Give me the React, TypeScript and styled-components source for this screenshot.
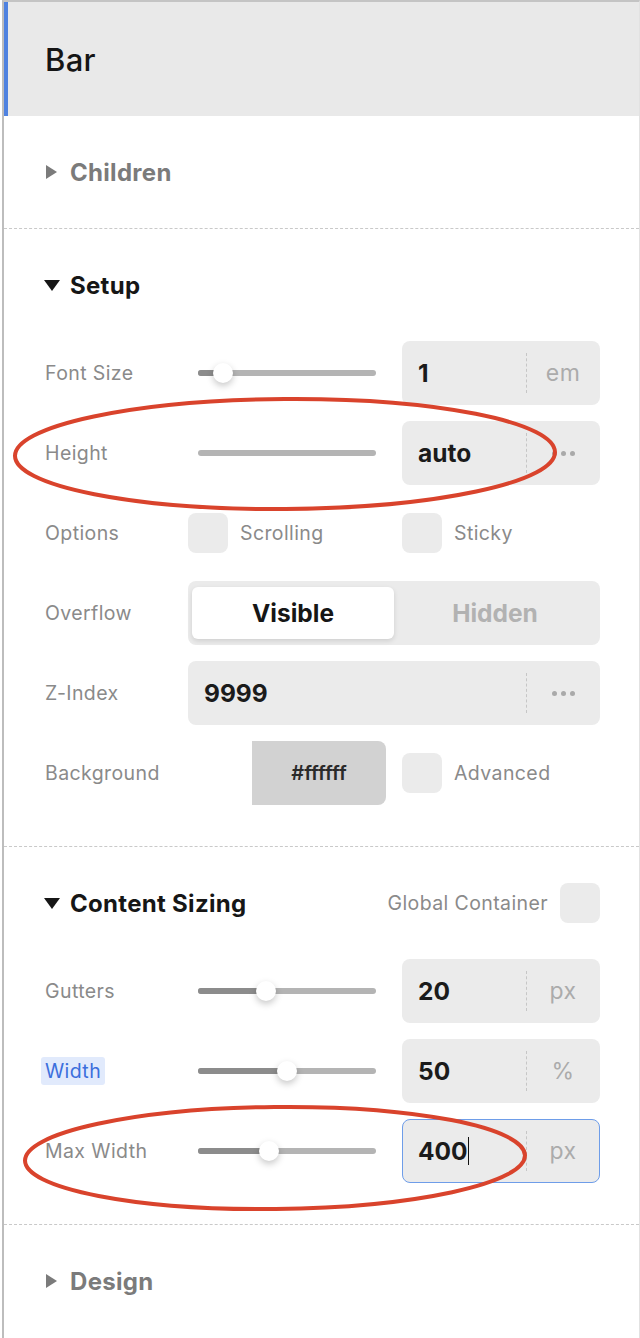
import React from "react";
import styled, { createGlobalStyle } from "styled-components";

const Global = createGlobalStyle`
  html, body { margin: 0; padding: 0; background: #ffffff; }
  body { font-family: Inter, "Noto Sans", "Liberation Sans", sans-serif; -webkit-font-smoothing: antialiased; }
  * { box-sizing: border-box; }
`;

const Panel = styled.div`
  position: relative;
  width: 638px;
  height: 1338px;
  margin-left: 2px;
  border-left: 2px solid #bdbdbd;
  border-top: 2px solid #c4c4c4;
  border-right: 1px solid #e2e2e2;
  overflow: hidden;
  background: #fff;
`;

const Header = styled.div`
  height: 114px;
  background: #e9e9e9;
  border-left: 4px solid #4f82e0;
  display: flex;
  align-items: center;
  padding-left: 37px;
  font-size: 31px;
  font-weight: 500;
  color: #151515;
  letter-spacing: 0.3px;
`;

const Section = styled.section<{ $last?: boolean; $collapsed?: boolean }>`
  padding: 36px 39px ${(p) => (p.$collapsed ? "36px" : "41px")} 41px;
  border-bottom: ${(p) => (p.$last ? "none" : "1px dashed #c9c9c9")};
  display: flex;
  flex-direction: column;
  gap: 16px;
`;

const SectionHead = styled.div`
  height: 40px;
  display: flex;
  align-items: center;
  justify-content: space-between;
  margin-bottom: 20px;
`;

const CollapsedHead = styled(SectionHead)`
  margin-bottom: 0;
`;

const Title = styled.div<{ $muted?: boolean }>`
  display: flex;
  align-items: center;
  gap: 11px;
  font-size: 24px;
  font-weight: 700;
  letter-spacing: 0.3px;
  color: ${(p) => (p.$muted ? "#7b7b7b" : "#161616")};
`;

const Caret = styled.span<{ $open?: boolean; $muted?: boolean }>`
  width: 0;
  height: 0;
  margin-left: ${(p) => (p.$open ? "-1px" : "1px")};
  ${(p) =>
    p.$open
      ? `border-left: 8px solid transparent; border-right: 8px solid transparent; border-top: 11px solid #161616; margin-right: -1px;`
      : `border-top: 7px solid transparent; border-bottom: 7px solid transparent; border-left: 11px solid ${p.$muted ? "#7b7b7b" : "#161616"}; margin-right: 2px;`}
`;

const Row = styled.div`
  display: grid;
  grid-template-columns: 143px 214px 198px;
  align-items: center;
  height: 64px;
`;

const Label = styled.div<{ $active?: boolean }>`
  font-size: 19.5px;
  color: ${(p) => (p.$active ? "#3c6fdc" : "#8a8a8a")};
  letter-spacing: 0.4px;
  white-space: nowrap;
  ${(p) =>
    p.$active
      ? `background: #e1eafc; justify-self: start; margin-left: -4px; padding: 2px 4px; border-radius: 3px;`
      : ``}
`;

const Track = styled.div`
  position: relative;
  height: 6px;
  margin: 0 26px 0 10px;
  border-radius: 3px;
  background: #b4b4b4;
`;

const Fill = styled.div`
  height: 100%;
  border-radius: 3px 0 0 3px;
  background: #8c8c8c;
`;

const Thumb = styled.div`
  position: absolute;
  top: 50%;
  width: 20px;
  height: 20px;
  margin: -10px 0 0 -10px;
  border-radius: 50%;
  background: #fff;
  box-shadow: 0 3px 7px rgba(0, 0, 0, 0.22);
`;

const Field = styled.div<{ $focus?: boolean; $wide?: boolean }>`
  height: 64px;
  border-radius: 8px;
  background: #ebebeb;
  display: grid;
  grid-template-columns: 1fr 1px 72px;
  align-items: center;
  border: ${(p) => (p.$focus ? "1.5px solid #6e9de9" : "1.5px solid transparent")};
  ${(p) => (p.$wide ? "grid-column: 2 / span 2;" : "")}
`;

const Value = styled.div`
  padding-left: 15px;
  font-size: 24.5px;
  font-weight: 700;
  color: #1b1b1b;
  display: flex;
  align-items: center;
`;

const Cursor = styled.span`
  display: inline-block;
  width: 1.5px;
  height: 28px;
  background: #111;
`;

const Divider = styled.div`
  height: 40px;
  border-left: 1px dashed #c6c6c6;
`;

const Unit = styled.div`
  text-align: center;
  font-size: 23px;
  color: #ababab;
  letter-spacing: 0.5px;
`;

const Dots = styled.div`
  display: flex;
  justify-content: center;
  gap: 4px;
  span {
    width: 5px;
    height: 5px;
    border-radius: 50%;
    background: #a9a9a9;
  }
`;

const CheckGroup = styled.div`
  display: flex;
  align-items: center;
  gap: 12px;
  font-size: 19.5px;
  color: #8a8a8a;
  letter-spacing: 0.4px;
  white-space: nowrap;
`;

const Box = styled.div`
  width: 40px;
  height: 40px;
  border-radius: 8px;
  background: #ebebeb;
  flex: none;
`;

const Segmented = styled.div`
  grid-column: 2 / span 2;
  height: 64px;
  border-radius: 8px;
  background: #ebebeb;
  display: grid;
  grid-template-columns: 1fr 1fr;
  padding: 6px 4px;
`;

const Segment = styled.div<{ $on?: boolean }>`
  display: flex;
  align-items: center;
  justify-content: center;
  font-size: 24.5px;
  font-weight: 700;
  border-radius: 6px;
  color: ${(p) => (p.$on ? "#161616" : "#b2b2b2")};
  background: ${(p) => (p.$on ? "#fff" : "transparent")};
  box-shadow: ${(p) => (p.$on ? "0 2px 5px rgba(0,0,0,0.12)" : "none")};
`;

const Swatch = styled.div`
  justify-self: end;
  margin-right: 16px;
  width: 134px;
  height: 64px;
  border-radius: 0 8px 8px 0;
  background: #d2d2d2;
  display: flex;
  align-items: center;
  justify-content: center;
  font-size: 20px;
  font-weight: 600;
  color: #2a2a2a;
`;

const GlobalToggle = styled(CheckGroup)`
  gap: 12px;
`;

const Overlay = styled.svg`
  position: absolute;
  left: -4px;
  top: -2px;
  pointer-events: none;
`;

function Slider({ pct, thumb = true }: { pct: number; thumb?: boolean }) {
  return (
    <Track>
      {thumb && <Fill style={{ width: `${pct}%` }} />}
      {thumb && <Thumb style={{ left: `${pct}%` }} />}
    </Track>
  );
}

function DotsIcon() {
  return (
    <Dots>
      <span />
      <span />
      <span />
    </Dots>
  );
}

export default function App() {
  return (
    <>
      <Global />
      <Panel>
        <Header>Bar</Header>

        <Section $collapsed>
          <CollapsedHead>
            <Title $muted>
              <Caret $muted />
              Children
            </Title>
          </CollapsedHead>
        </Section>

        <Section>
          <SectionHead>
            <Title>
              <Caret $open />
              Setup
            </Title>
          </SectionHead>

          <Row>
            <Label>Font Size</Label>
            <Slider pct={14} />
            <Field>
              <Value>1</Value>
              <Divider />
              <Unit>em</Unit>
            </Field>
          </Row>

          <Row>
            <Label>Height</Label>
            <Slider pct={0} thumb={false} />
            <Field>
              <Value>auto</Value>
              <Divider />
              <DotsIcon />
            </Field>
          </Row>

          <Row>
            <Label>Options</Label>
            <CheckGroup>
              <Box />
              Scrolling
            </CheckGroup>
            <CheckGroup>
              <Box />
              Sticky
            </CheckGroup>
          </Row>

          <Row>
            <Label>Overflow</Label>
            <Segmented>
              <Segment $on>Visible</Segment>
              <Segment>Hidden</Segment>
            </Segmented>
          </Row>

          <Row>
            <Label>Z-Index</Label>
            <Field $wide>
              <Value>9999</Value>
              <Divider />
              <DotsIcon />
            </Field>
          </Row>

          <Row>
            <Label>Background</Label>
            <Swatch>#ffffff</Swatch>
            <CheckGroup>
              <Box />
              Advanced
            </CheckGroup>
          </Row>
        </Section>

        <Section>
          <SectionHead>
            <Title>
              <Caret $open />
              Content Sizing
            </Title>
            <GlobalToggle>
              Global Container
              <Box />
            </GlobalToggle>
          </SectionHead>

          <Row>
            <Label>Gutters</Label>
            <Slider pct={38} />
            <Field>
              <Value>20</Value>
              <Divider />
              <Unit>px</Unit>
            </Field>
          </Row>

          <Row>
            <Label $active>Width</Label>
            <Slider pct={50} />
            <Field>
              <Value>50</Value>
              <Divider />
              <Unit>%</Unit>
            </Field>
          </Row>

          <Row>
            <Label>Max Width</Label>
            <Slider pct={40} />
            <Field $focus>
              <Value>
                400
                <Cursor />
              </Value>
              <Divider />
              <Unit>px</Unit>
            </Field>
          </Row>
        </Section>

        <Section $last $collapsed>
          <CollapsedHead>
            <Title $muted>
              <Caret $muted />
              Design
            </Title>
          </CollapsedHead>
        </Section>

        <Overlay width="640" height="1338" viewBox="0 0 640 1338">
          <ellipse cx="285" cy="454" rx="270" ry="55" fill="none" stroke="#d9432c" strokeWidth="4" transform="rotate(-0.4 285 454)" />
          <ellipse cx="275" cy="1158" rx="250" ry="51" fill="none" stroke="#d9432c" strokeWidth="4" transform="rotate(-0.6 275 1158)" />
        </Overlay>
      </Panel>
    </>
  );
}
